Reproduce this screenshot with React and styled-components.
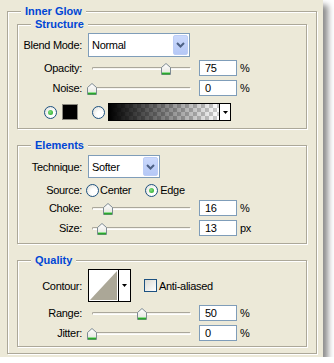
import React from "react";
import styled, { createGlobalStyle } from "styled-components";

const Global = createGlobalStyle`
  html, body { margin: 0; padding: 0; background: #fff; }
  body {
    font-family: "Liberation Sans", Arial, sans-serif;
    font-size: 11px;
    letter-spacing: -0.3px;
    color: #000;
  }
`;

const Panel = styled.div`
  width: 323px;
  height: 357px;
  box-sizing: border-box;
  background: #ece9d8;
  padding: 11px 6px 0 7px;
  box-shadow: 5px 5px 6px rgba(0, 0, 0, 0.45);
`;

const Group = styled.section`
  position: relative;
  box-sizing: border-box;
  height: ${(p) => p.$h}px;
  border: 1px solid #aca899;
  box-shadow: 1px 1px 0 #fff, inset 1px 1px 0 #fff;
  padding: ${(p) => p.$pad || "0"};
  display: flex;
  flex-direction: column;
  gap: ${(p) => p.$gap || 0}px;
`;

const Legend = styled.h3`
  position: absolute;
  top: -7px;
  left: 13px;
  margin: 0;
  padding: 0 4px;
  height: 13px;
  line-height: 13px;
  background: #ece9d8;
  color: #0046d5;
  font-size: 11px;
  font-weight: bold;
  letter-spacing: 0;
  white-space: nowrap;
`;

const Row = styled.div`
  display: flex;
  align-items: center;
  height: ${(p) => p.$h}px;
  margin-top: ${(p) => p.$mt}px;
  flex-shrink: 0;
`;

const Label = styled.span`
  width: 64px;
  flex-shrink: 0;
  text-align: right;
  white-space: nowrap;
`;

const SelectBox = styled.div`
  box-sizing: border-box;
  width: ${(p) => p.$w}px;
  height: ${(p) => p.$h}px;
  margin-left: 6px;
  border: 1px solid #7f9db9;
  background: #fff;
  display: flex;
  align-items: center;
  justify-content: space-between;
  padding-left: 3px;
  padding-right: 1px;
`;

const SelectText = styled.span`
  font-size: 11px;
`;

const DropButton = styled.span`
  box-sizing: border-box;
  width: 15px;
  height: ${(p) => p.$h}px;
  border: 1px solid #bccdf6;
  border-radius: 2px;
  background: linear-gradient(#cbd9fc, #b5c8f6);
  display: flex;
  align-items: center;
  justify-content: center;
`;

const Chevron = () => (
  <svg width="9" height="6" viewBox="0 0 9 6">
    <path d="M1 1 L4.5 4.5 L8 1" fill="none" stroke="#4d6185" strokeWidth="2" />
  </svg>
);

const Select = ({ value, w, h }) => (
  <SelectBox $w={w} $h={h}>
    <SelectText>{value}</SelectText>
    <DropButton $h={h - 4}>
      <Chevron />
    </DropButton>
  </SelectBox>
);

const SliderWrap = styled.div`
  position: relative;
  width: 109px;
  height: 16px;
  margin-left: 5px;
  flex-shrink: 0;
`;

const Track = styled.div`
  position: absolute;
  left: 5px;
  right: 5px;
  top: 7px;
  height: 3px;
  box-sizing: border-box;
  border: 1px solid #aaa79b;
  border-right-color: #fff;
  border-bottom-color: #fff;
  border-radius: 2px;
  background: #f4f3ee;
`;

const Thumb = styled.svg`
  position: absolute;
  top: 3px;
`;

const Slider = ({ value }) => (
  <SliderWrap>
    <Track />
    <Thumb width="10" height="12" viewBox="0 0 10 12" style={{ left: value * 0.99 }}>
      <defs>
        <linearGradient id="tg" x1="0" y1="0" x2="0" y2="1">
          <stop offset="0" stopColor="#ffffff" />
          <stop offset="1" stopColor="#e4e3dc" />
        </linearGradient>
      </defs>
      <path d="M0.5 4.5 L5 0.5 L9.5 4.5 V11.5 H0.5 Z" fill="url(#tg)" stroke="#7d8a92" />
      <rect x="1" y="9" width="8" height="1" fill="#8fdc8f" />
      <rect x="1" y="10" width="8" height="1.5" fill="#2ca52c" />
    </Thumb>
  </SliderWrap>
);

const ValueBox = styled.div`
  box-sizing: border-box;
  width: 38px;
  height: 16px;
  margin-left: 3px;
  border: 1px solid #7f9db9;
  background: #fff;
  padding-left: 5px;
  line-height: 14px;
  flex-shrink: 0;
`;

const Unit = styled.span`
  margin-left: 3px;
`;

const SliderRow = ({ label, value, pos, unit, mt }) => (
  <Row $h={16} $mt={mt}>
    <Label>{label}</Label>
    <Slider value={pos} />
    <ValueBox>{value}</ValueBox>
    <Unit>{unit}</Unit>
  </Row>
);

const RadioCircle = styled.span`
  box-sizing: border-box;
  width: 13px;
  height: 13px;
  margin-left: ${(p) => p.$ml || 0}px;
  border: 1px solid #1c5180;
  border-radius: 50%;
  background: radial-gradient(circle at 65% 65%, #ffffff 30%, #dcdbd3 100%);
  display: flex;
  align-items: center;
  justify-content: center;
  flex-shrink: 0;
  &::after {
    content: "";
    display: ${(p) => (p.$on ? "block" : "none")};
    width: 5px;
    height: 5px;
    border-radius: 50%;
    background: radial-gradient(circle at 40% 40%, #7fe07f, #21a121);
  }
`;

const OptionText = styled.span`
  margin-left: ${(p) => p.$ml}px;
`;

const ColorSwatch = styled.span`
  box-sizing: border-box;
  width: 16px;
  height: 16px;
  margin-left: 5px;
  border: 1px solid #8a887f;
  background: #000;
  flex-shrink: 0;
`;

const GradientBox = styled.div`
  box-sizing: border-box;
  width: 123px;
  height: 18px;
  margin-left: 3px;
  border: 1px solid #000;
  display: flex;
`;

const GradientFill = styled.div`
  flex: 1;
  background-color: #fff;
  background-image: linear-gradient(to right, #000 0%, rgba(0, 0, 0, 0) 100%),
    linear-gradient(45deg, #cdcdcd 25%, transparent 25%, transparent 75%, #cdcdcd 75%),
    linear-gradient(45deg, #cdcdcd 25%, transparent 25%, transparent 75%, #cdcdcd 75%);
  background-size: 100% 100%, 8px 8px, 8px 8px;
  background-position: 0 0, 0 0, 4px 4px;
`;

const ArrowCell = styled.div`
  width: ${(p) => p.$w}px;
  border-left: 1px solid #000;
  background: #fff;
  display: flex;
  align-items: center;
  justify-content: center;
`;

const DownArrow = () => (
  <svg width="5" height="3" viewBox="0 0 5 3">
    <path d="M0 0 H5 L2.5 3 Z" fill="#000" />
  </svg>
);

const ContourBox = styled.div`
  box-sizing: border-box;
  width: 43px;
  height: 33px;
  margin-left: 6px;
  border: 1px solid #000;
  display: flex;
  flex-shrink: 0;
`;

const ContourSwatch = styled.div`
  flex: 1;
  border: 1px solid #fff;
  background: #fff;
  display: flex;
`;

const CheckBox = styled.span`
  box-sizing: border-box;
  width: 13px;
  height: 13px;
  margin-left: 13px;
  border: 1px solid #1c5180;
  background: linear-gradient(135deg, #dcdbd3 0%, #ffffff 100%);
  flex-shrink: 0;
`;

export default function App() {
  return (
    <>
      <Global />
      <Panel>
        <Group $h={343} $pad="12px 9px 6px 9px" $gap={16}>
          <Legend>Inner Glow</Legend>

          <Group $h={105}>
            <Legend>Structure</Legend>
            <Row $h={24} $mt={8}>
              <Label>Blend Mode:</Label>
              <Select value="Normal" w={102} h={24} />
            </Row>
            <SliderRow label="Opacity:" value="75" pos={75} unit="%" mt={3} />
            <SliderRow label="Noise:" value="0" pos={0} unit="%" mt={4} />
            <Row $h={18} $mt={7}>
              <RadioCircle $on $ml={26} />
              <ColorSwatch />
              <RadioCircle $ml={14} />
              <GradientBox>
                <GradientFill />
                <ArrowCell $w={10}>
                  <DownArrow />
                </ArrowCell>
              </GradientBox>
            </Row>
          </Group>

          <Group $h={99}>
            <Legend>Elements</Legend>
            <Row $h={23} $mt={9}>
              <Label>Technique:</Label>
              <Select value="Softer" w={72} h={23} />
            </Row>
            <Row $h={16} $mt={4}>
              <Label>Source:</Label>
              <RadioCircle $ml={4} />
              <OptionText $ml={1}>Center</OptionText>
              <RadioCircle $on $ml={14} />
              <OptionText $ml={2}>Edge</OptionText>
            </Row>
            <SliderRow label="Choke:" value="16" pos={16} unit="%" mt={2} />
            <SliderRow label="Size:" value="13" pos={10} unit="px" mt={4} />
          </Group>

          <Group $h={87}>
            <Legend>Quality</Legend>
            <Row $h={33} $mt={8}>
              <Label>Contour:</Label>
              <ContourBox>
                <ContourSwatch>
                  <svg width="27" height="29" viewBox="0 0 27 29">
                    <path d="M0 29 L27 0 V29 Z" fill="#aba797" />
                  </svg>
                </ContourSwatch>
                <ArrowCell $w={11}>
                  <DownArrow />
                </ArrowCell>
              </ContourBox>
              <CheckBox />
              <OptionText $ml={2}>Anti-aliased</OptionText>
            </Row>
            <SliderRow label="Range:" value="50" pos={50} unit="%" mt={3} />
            <SliderRow label="Jitter:" value="0" pos={0} unit="%" mt={4} />
          </Group>
        </Group>
      </Panel>
    </>
  );
}
